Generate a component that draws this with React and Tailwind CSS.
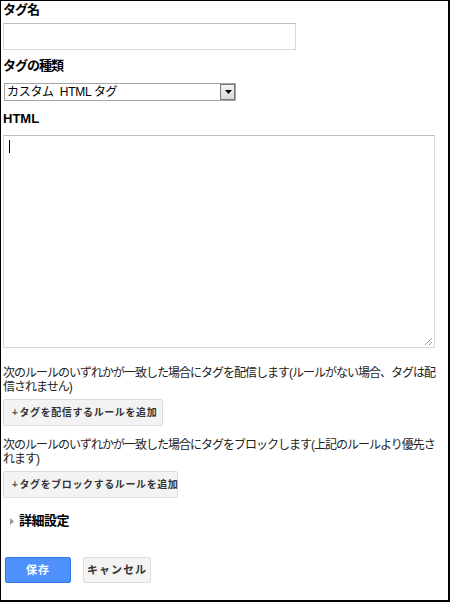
const font = { fontFamily: '"Liberation Sans", "Noto Sans CJK JP", sans-serif' };

const RuleButton = ({ label, width }) => (
    <button
        className={`${width} h-[27px] mt-[5px] flex items-center pl-[8px] bg-[#f3f3f3] border border-[#dcdcdc] rounded-[2px] text-[10px] font-bold text-[#333] tracking-[0.6px] leading-none whitespace-nowrap`}
    >
        <span className="text-[#555] mr-[1px]">+</span>
        {label}
    </button>
);

const App = () => {
    return (
        <div
            style={font}
            className="w-[450px] h-[602px] bg-white border-t border-l border-r-2 border-b-2 border-black px-[2px] text-[#222] overflow-hidden"
        >
            <div className="text-[13px] font-bold leading-[16px] mt-[1px] tracking-[-1px] text-black">タグ名</div>
            <div className="mt-[5px] w-[293px] h-[27px] border border-[#d9d9d9] border-t-[#c0c0c0] bg-white"></div>

            <div className="text-[13px] font-bold leading-[16px] mt-[8px] tracking-[-1px] text-black">タグの種類</div>
            <div className="mt-[9px] ml-[1px] w-[232px] h-[18px] flex border border-[#a5a5a5] bg-white">
                <div className="flex-1 text-[12px] leading-[16px] pl-[2px] tracking-[-0.3px] text-black">カスタム&nbsp; HTML タグ</div>
                <div className="w-[15px] h-full border-l border-[#8a8a8a] bg-gradient-to-b from-[#f4f4f4] to-[#d8d8d8] flex items-center justify-center outline outline-1 outline-[#7a7a7a] -outline-offset-1">
                    <svg width="7" height="4" viewBox="0 0 7 4">
                        <polygon points="0,0 7,0 3.5,4" fill="#000" />
                    </svg>
                </div>
            </div>

            <div className="text-[13px] font-bold leading-[16px] mt-[10px] text-black">HTML</div>
            <div className="relative mt-[8px] w-[432px] h-[213px] border border-[#d9d9d9] border-t-[#c0c0c0] bg-white">
                <div className="absolute left-[5px] top-[4px] w-[1px] h-[13px] bg-black"></div>
                <svg className="absolute right-[1px] bottom-[1px]" width="9" height="9" viewBox="0 0 9 9">
                    <line x1="8" y1="1" x2="1" y2="8" stroke="#999" strokeWidth="1" />
                    <line x1="8" y1="5" x2="5" y2="8" stroke="#999" strokeWidth="1" />
                </svg>
            </div>

            <p className="mt-[18px] text-[12px] leading-[14px] tracking-[-1px] whitespace-nowrap">
                次のルールのいずれかが一致した場合にタグを配信します(ルールがない場合、タグは配<br />信されません)
            </p>
            <RuleButton label="タグを配信するルールを追加" width="w-[160px]" />

            <p className="mt-[12px] text-[12px] leading-[14px] tracking-[-1px] whitespace-nowrap">
                次のルールのいずれかが一致した場合にタグをブロックします(上記のルールより優先さ<br />れます)
            </p>
            <RuleButton label="タグをブロックするルールを追加" width="w-[175px]" />

            <div className="mt-[14px] h-[18px] flex items-center pl-[7px]">
                <svg width="4" height="7" viewBox="0 0 4 7" className="mr-[5px]">
                    <polygon points="0,0 4,3.5 0,7" fill="#999" />
                </svg>
                <span className="text-[13px] font-semibold tracking-[-0.5px] text-black">詳細設定</span>
            </div>

            <div className="mt-[27px] flex gap-[12px] ml-[2px]">
                <button className="w-[66px] h-[26px] rounded-[2px] bg-[#4d90fe] border border-[#3079ed] text-white text-[11px] font-bold tracking-[1px]">
                    保存
                </button>
                <button className="w-[68px] h-[26px] rounded-[2px] bg-[#f3f3f3] border border-[#dcdcdc] text-[#333] text-[11px] font-bold tracking-[1px]">
                    キャンセル
                </button>
            </div>
        </div>
    );
};

export default App;
